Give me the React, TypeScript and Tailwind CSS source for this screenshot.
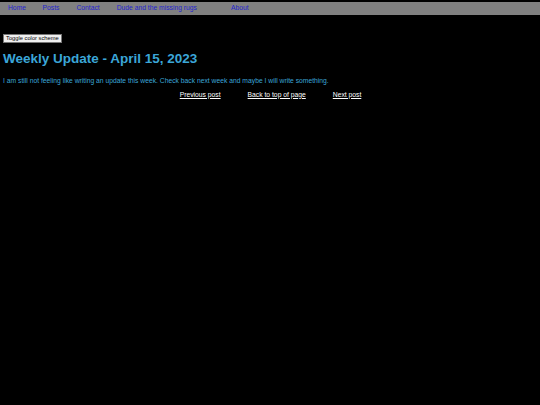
export default function App() {
  return (
    <div className="min-h-[405px] bg-black pt-[2px] font-['Liberation_Sans',Arial,sans-serif]">
      <nav className="flex h-[12.5px] items-center bg-[#808080] text-[6.75px] text-[#2424d0]">
        <a className="ml-[8px]">Home</a>
        <a className="ml-[16.5px]">Posts</a>
        <a className="ml-[17px]">Contact</a>
        <a className="ml-[17px]">Dude and the missing rugs</a>
        <a className="ml-[34px]">About</a>
      </nav>
      <div className="px-[3px]">
        <button className="mt-[19px] block border border-[#767676] bg-[#efefef] px-[2px] py-0 text-[5.75px] leading-[7px] text-black">
          Toggle color scheme
        </button>
        <h1 className="mt-[8.5px] text-[13.5px] font-bold leading-[16px] text-[#3ba6d8]">
          Weekly Update - April 15, 2023
        </h1>
        <p className="mt-[9.5px] text-[6.75px] leading-[8px] text-[#3ba6d8]">
          I am still not feeling like writing an update this week. Check back next week and maybe I will write something.
        </p>
        <div className="mt-[6px] flex justify-center gap-[27px] pl-[1px] text-[6.75px] leading-[8px] text-white">
          <a className="underline">Previous post</a>
          <a className="underline">Back to top of page</a>
          <a className="underline">Next post</a>
        </div>
      </div>
    </div>
  );
}
